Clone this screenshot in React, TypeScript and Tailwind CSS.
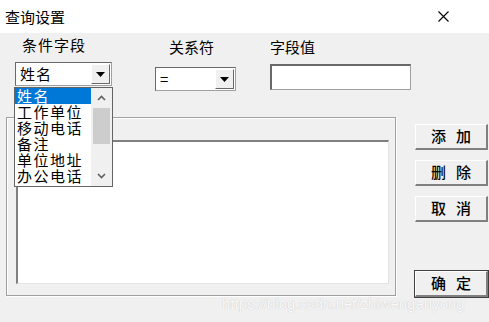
import React from "react";

const items = ["姓名", "工作单位", "移动电话", "备注", "单位地址", "办公电话"];

function Arrow() {
  return (
    <svg width="9" height="5" viewBox="0 0 9 5">
      <path d="M0 0 H9 L4.5 5 Z" fill="#000" />
    </svg>
  );
}

function Combo({ value, width, className }: { value: string; width: string; className?: string }) {
  return (
    <div
      className={`${width} ${className ?? ""} h-[24px] bg-white flex items-stretch border border-[#a0a0a0] border-l-[#696969] border-t-[#696969] p-[1px]`}
    >
      <div className="flex-1 pl-[3px] text-[15px] leading-[20px] tracking-[1px]">{value}</div>
      <div className="w-[19px] bg-[#f0f0f0] flex items-center justify-center border-l border-t border-white border-r border-r-[#696969] border-b border-b-[#696969]">
        <Arrow />
      </div>
    </div>
  );
}

function Btn({ label, def }: { label: string; def?: boolean }) {
  return (
    <div
      className={`w-[73px] h-[26px] flex items-center justify-center text-[15px] font-medium tracking-[10px] pl-[10px] bg-[#f0f0f0] border-t border-l border-white border-r-2 border-b-2 border-r-[#808080] border-b-[#808080] ${
        def ? "outline outline-1 outline-[#404040]" : ""
      }`}
    >
      {label}
    </div>
  );
}

export default function App() {
  return (
    <div
      className="w-[489px] h-[322px] bg-[#f0f0f0] relative overflow-hidden text-black"
      style={{ fontFamily: '"Noto Sans CJK SC", "Noto Sans", sans-serif' }}
    >
      {/* title bar */}
      <div className="h-[33px] bg-white flex items-center justify-between pl-[5px] pr-[40px]">
        <span className="text-[15px] leading-none">查询设置</span>
        <svg width="11" height="11" viewBox="0 0 11 11">
          <path d="M0.5 0.5 L10.5 10.5 M10.5 0.5 L0.5 10.5" stroke="#000" strokeWidth="1.1" />
        </svg>
      </div>

      <div className="flex">
        <div className="w-[405px]">
          {/* criteria fields */}
          <div className="flex h-[84px]">
            <div className="flex flex-col ml-[15px] w-[97px]">
              <span className="pl-[7px] mt-[3px] text-[15px] leading-[18px] tracking-[1px]">条件字段</span>
              <Combo value="姓名" width="w-[97px]" className="mt-[8px]" />
            </div>
            <div className="flex flex-col ml-[43px] w-[81px]">
              <span className="pl-[14px] mt-[5px] text-[15px] leading-[18px]">关系符</span>
              <Combo value="=" width="w-[81px]" className="mt-[11px]" />
            </div>
            <div className="flex flex-col ml-[34px]">
              <span className="mt-[5px] text-[15px] leading-[18px]">字段值</span>
              <div className="mt-[8px] w-[141px] h-[26px] bg-white border border-[#a0a0a0] border-l-[#696969] border-t-[#696969] border-l-2 border-t-2" />
            </div>
          </div>

          {/* group box */}
          <div className="ml-[6px] w-[390px] h-[179px] border border-[#a0a0a0] shadow-[inset_1px_1px_0_#fff,1px_1px_0_#fff] pt-[22px] pl-[9px] pr-[6px] pb-[11px]">
            <div className="h-full bg-white border-l-2 border-t-2 border-l-[#808080] border-t-[#808080] border-r border-b border-r-[#e3e3e3] border-b-[#e3e3e3]" />
          </div>
        </div>

        {/* buttons */}
        <div className="flex flex-col pl-[10px] pt-[91px]">
          <Btn label="添加" />
          <div className="mt-[10px]">
            <Btn label="删除" />
          </div>
          <div className="mt-[10px]">
            <Btn label="取消" />
          </div>
          <div className="mt-[49px]">
            <Btn label="确定" def />
          </div>
        </div>
      </div>

      {/* open drop-down list */}
      <div className="absolute left-[14px] top-[87px] w-[99px] h-[100px] bg-white border border-[#646464] flex">
        <div className="flex-1">
          {items.map((it, i) => (
            <div
              key={it}
              className={`h-[16px] pl-[2px] text-[15px] leading-[16px] tracking-[1.5px] ${
                i === 0 ? "bg-[#0078d7] text-white" : ""
              }`}
            >
              {it}
            </div>
          ))}
        </div>
        <div className="w-[21px] bg-[#f0f0f0] flex flex-col items-center">
          <div className="h-[20px] flex items-center justify-center">
            <svg width="9" height="6" viewBox="0 0 9 6">
              <path d="M1 5 L4.5 1.5 L8 5" stroke="#606060" strokeWidth="1.6" fill="none" />
            </svg>
          </div>
          <div className="w-[17px] h-[36px] bg-[#cdcdcd]" />
          <div className="flex-1" />
          <div className="h-[20px] flex items-center justify-center">
            <svg width="9" height="6" viewBox="0 0 9 6">
              <path d="M1 1 L4.5 4.5 L8 1" stroke="#606060" strokeWidth="1.6" fill="none" />
            </svg>
          </div>
        </div>
      </div>

      {/* watermark */}
      <div
        className="absolute left-[222px] top-[295px] text-[15px] leading-[18px] text-[#fafafa] [text-shadow:0_0_1px_#b8b8b8]"
        style={{ fontFamily: '"Liberation Sans", Arial, sans-serif' }}
      >
        https://blog.csdn.net/zhiwenganyong
      </div>
    </div>
  );
}
